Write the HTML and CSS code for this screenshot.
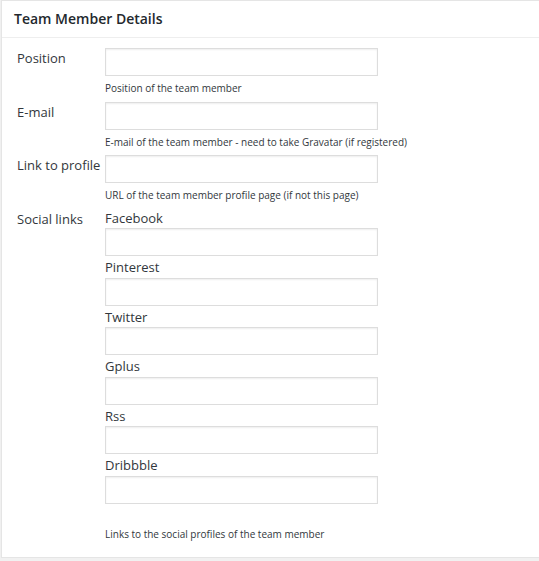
FILE: index.html
```html
<!DOCTYPE html>
<html>
<head>
<meta charset="utf-8">
<link rel="stylesheet" href="styles.css">
</head>
<body>
<div class="postbox">
  <h2 class="hndle">Team Member Details</h2>
  <div class="inside">
    <div class="row">
      <label class="lbl">Position</label>
      <div class="field">
        <input class="txt" type="text">
        <p class="desc">Position of the team member</p>
      </div>
    </div>
    <div class="row">
      <label class="lbl">E-mail</label>
      <div class="field">
        <input class="txt" type="text">
        <p class="desc">E-mail of the team member - need to take Gravatar (if registered)</p>
      </div>
    </div>
    <div class="row">
      <label class="lbl">Link to profile</label>
      <div class="field">
        <input class="txt" type="text">
        <p class="desc">URL of the team member profile page (if not this page)</p>
      </div>
    </div>
    <div class="row">
      <label class="lbl">Social links</label>
      <div class="field">
        <div class="social">
          <div class="sitem">
            <label class="slbl">Facebook</label>
            <input class="txt" type="text">
          </div>
          <div class="sitem">
            <label class="slbl">Pinterest</label>
            <input class="txt" type="text">
          </div>
          <div class="sitem">
            <label class="slbl">Twitter</label>
            <input class="txt" type="text">
          </div>
          <div class="sitem">
            <label class="slbl">Gplus</label>
            <input class="txt" type="text">
          </div>
          <div class="sitem">
            <label class="slbl">Rss</label>
            <input class="txt" type="text">
          </div>
          <div class="sitem">
            <label class="slbl">Dribbble</label>
            <input class="txt" type="text">
          </div>
        </div>
        <p class="desc desc-social">Links to the social profiles of the team member</p>
      </div>
    </div>
  </div>
</div>
</body>
</html>
```

FILE: styles.css
```css
html, body {
  margin: 0;
  padding: 0;
  background: #f1f1f1;
  overflow: hidden;
}
body {
  padding-left: 1px;
  font-family: "Open Sans", "Liberation Sans", sans-serif;
  color: #32373c;
}
.postbox {
  width: 580px;
  background: #fff;
  border: 1px solid #e5e5e5;
  box-shadow: 0 1px 1px rgba(0,0,0,.04);
}
.hndle {
  margin: 0;
  height: 36px;
  line-height: 36px;
  padding: 0 12px;
  font-size: 14px;
  font-weight: 600;
  color: #23282d;
  border-bottom: 1px solid #eee;
}
.inside {
  padding: 10px 0 16px 15px;
  display: flex;
  flex-direction: column;
  gap: 6px;
}
.row {
  display: grid;
  grid-template-columns: 88px 273px;
}
.lbl, .slbl {
  font-size: 13px;
  line-height: 20px;
  color: #32373c;
  display: block;
}
.slbl {
  line-height: 19.5px;
}
.field {
  display: flex;
  flex-direction: column;
}
.txt {
  display: block;
  box-sizing: border-box;
  width: 273px;
  height: 28px;
  margin: 0;
  border: 1px solid #ddd;
  box-shadow: inset 0 1px 2px rgba(0,0,0,.07);
  background: #fff;
  padding: 3px 5px;
  font-family: inherit;
}
.social {
  display: flex;
  flex-direction: column;
  gap: 2px;
}
.sitem {
  display: flex;
  flex-direction: column;
}
.desc {
  margin: 5px 0 0;
  font-size: 10px;
  line-height: 14.5px;
  color: #32373c;
  white-space: nowrap;
}
.desc-social {
  margin-top: 23px;
}
```
